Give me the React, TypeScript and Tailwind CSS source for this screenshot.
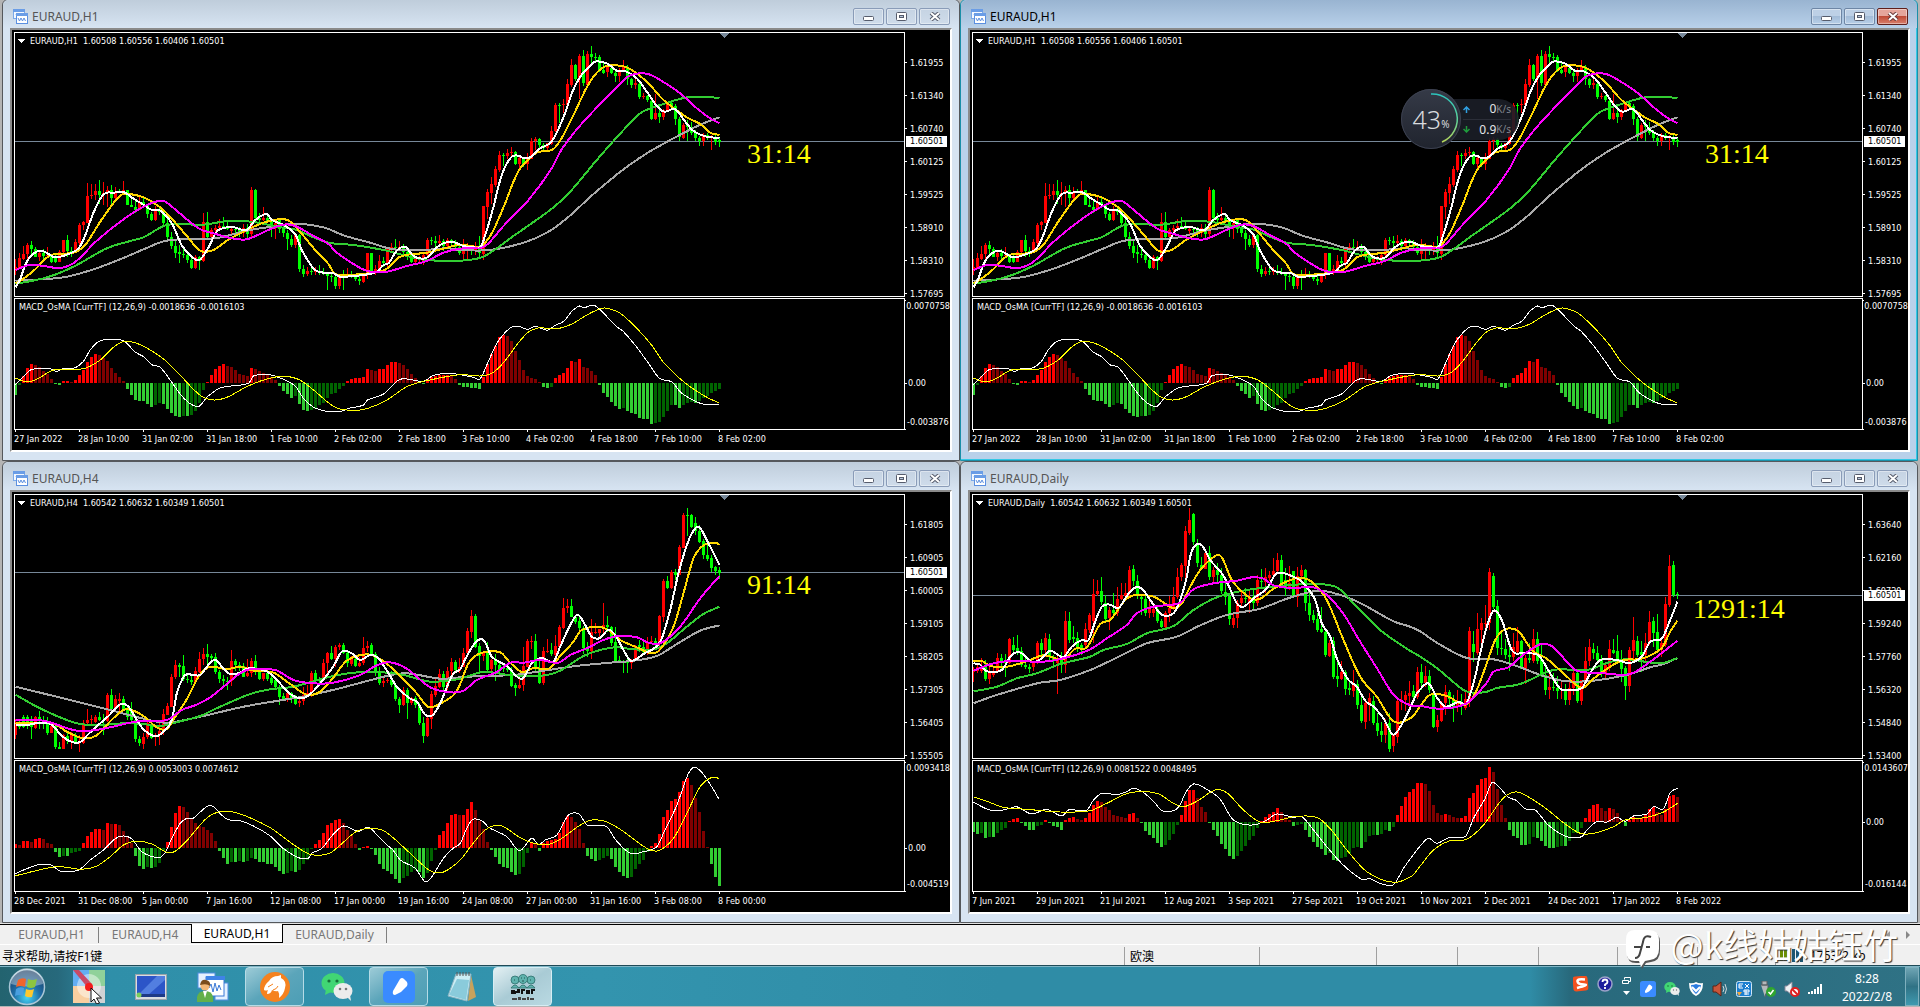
import React from "react";

type Series = { color: string; a: string; b: string };
type ChartData = {
  title: string;
  quotes: string;
  timer: string;
  timerX: number;
  timerY: number;
  priceY: number;
  originX: number;
  top: number;
  macdTop: number;
  macdZero: number;
  macdText: string;
  prices: string[];
  macdLabels: [string, string, string];
  dates: string[];
  candles: string;
  hist: string;
  averages: Series[];
  macd: Series;
  signal: Series;
};

const CHART_FONT = "font-['DejaVu_Sans_Condensed','Noto_Sans',sans-serif]";
const UI_FONT = "font-['Noto_Sans','Noto_Sans_CJK_SC',sans-serif]";

const nums = (s: string) => s.trim().split(/[\s,]+/).map(Number);

/* Plot data is stored in thirds of a pixel; the second half of a series starts 1380 units further right. */
function smoothPath(s: Series, originX: number, top: number) {
  const read = (raw: string, dx: number) => {
    const v = nums(raw);
    const out: number[][] = [];
    for (let i = 0; i < v.length; i += 2) out.push([(v[i] + dx - originX) / 3 + 0.5, v[i + 1] / 3 - top]);
    return out;
  };
  const second = read(s.b, 1380);
  const first = read(s.a, 0).filter((p) => p[0] < second[0][0] - 3);
  const p = [...first, ...second];
  let d = `M${p[0][0].toFixed(1)} ${p[0][1].toFixed(1)}`;
  for (let i = 0; i < p.length - 1; i++) {
    const p0 = p[Math.max(0, i - 1)];
    const p1 = p[i];
    const p2 = p[i + 1];
    const p3 = p[Math.min(p.length - 1, i + 2)];
    const dx = (p2[0] - p1[0]) / 3;
    const m1 = (p2[1] - p0[1]) / (p2[0] - p0[0] || 1);
    const m2 = (p3[1] - p1[1]) / (p3[0] - p1[0] || 1);
    d += `C${(p1[0] + dx).toFixed(1)} ${(p1[1] + m1 * dx).toFixed(1)} ${(p2[0] - dx).toFixed(1)} ${(p2[1] - m2 * dx).toFixed(1)} ${p2[0].toFixed(1)} ${p2[1].toFixed(1)}`;
  }
  return d;
}

function candlePaths(raw: string, top: number) {
  const v = nums(raw);
  let up = "";
  let down = "";
  for (let i = 0; i * 4 < v.length; i++) {
    const [h, o, c, l] = v.slice(i * 4, i * 4 + 4).map((n) => Math.round(n / 3) - top);
    const rising = v[i * 4 + 2] < v[i * 4 + 1];
    const y = Math.min(o, c);
    const height = Math.max(1, Math.abs(o - c));
    const d = `M${i * 4} ${h}h1V${l}h-1zM${i * 4 - 1} ${y}h3v${height}h-3z`;
    if (rising) up += d;
    else down += d;
  }
  return { up, down };
}

function histPaths(raw: string, zero: number) {
  const v = nums(raw);
  const out = ["", "", "", ""];
  v.forEach((n, i) => {
    const prev = i ? v[i - 1] : 0;
    const growing = n > 0 ? n >= prev : n <= prev;
    const k = (n > 0 ? 0 : 2) + (growing ? 0 : 1);
    out[k] += `M${i * 4 - 1} ${zero}h3v${-n}h-3z`;
  });
  return out;
}

const H1: ChartData = {
  title: "EURAUD,H1",
  quotes: "EURAUD,H1  1.60508 1.60556 1.60406 1.60501",
  timer: "31:14",
  timerX: 732,
  timerY: 130,
  priceY: 108,
  originX: 46,
  top: 33,
  macdTop: 299,
  macdZero: 84,
  macdText: "MACD_OsMA [CurrTF] (12,26,9) -0.0018636 -0.0016103",
  prices: ["1.61955", "1.61340", "1.60740", "1.60125", "1.59525", "1.58910", "1.58310", "1.57695"],
  macdLabels: ["0.0070758", "0.00", "-0.003876"],
  dates: ["27 Jan 2022", "28 Jan 10:00", "31 Jan 02:00", "31 Jan 18:00", "1 Feb 10:00", "2 Feb 02:00", "2 Feb 18:00", "3 Feb 10:00", "4 Feb 02:00", "4 Feb 18:00", "7 Feb 10:00", "8 Feb 02:00"],
  candles: `776 808 800 824,760 806 774 808,738 776 762 780,730 762 735 776,722 735 746 768,742 746 770 772,755 770 760 782,748 760 768 782,742 768 766 772,764 768 785 788,764 772 785 790,750 785 756 785,720 756 720 758,705 720 752 770,742 752 758 770,718 758 726 760,668 730 676 735,662 676 666 690,549 668 588 670,552 588 586 598,552 586 573 600,540 573 584 612,546 584 580 616,558 580 570 622,555 570 594 612,562 594 575 598,566 575 577 580,543 577 570 580,570 570 614 614,590 614 620 622,600 620 630 640,590 630 606 630,588 606 614 625,612 614 642 655,636 642 660 664,618 660 626 664,618 626 635 645,630 636 668 682,640 668 710 722,696 710 737 748,718 737 758 775,736 756 762 788,748 762 766 775,755 766 780 790,766 780 803 808,766 803 772 808,768 772 782 810,640 783 666 786,636 666 712 720,684 712 690 725,675 690 684 696,658 684 678 690,652 678 684 686,665 684 684 690,678 694 686 704,682 686 688 700,680 690 700 710,672 700 684 710,672 684 702 715,560 702 570 712,566 570 654 658,640 654 660 670,622 660 655 664,640 655 664 668,655 664 684 712,658 684 670 716,658 660 688 700,675 688 700 712,690 700 718 750,705 718 735 742,700 735 706 744,702 706 808 816,795 808 822 830,800 822 812 828,800 812 814 826,800 814 812 826,796 812 818 826,805 818 818 826,816 820 828 870,820 828 832 846,820 832 858 866,824 858 830 868,810 828 828 870,804 828 822 832,812 822 828 834,822 828 836 844,826 836 842 854,822 846 826 850,758 826 760 836,758 760 816 822,795 816 808 824,766 808 782 812,770 782 790 800,742 792 748 800,728 748 740 756,716 740 744 760,722 744 742 750,732 742 756 770,742 756 766 780,755 766 785 790,770 785 776 792,768 780 776 790,758 782 764 796,714 764 720 770,712 720 724 735,708 724 728 740,706 728 722 735,718 724 738 752,714 738 720 745,718 720 728 740,720 728 740 748,728 740 760 765,716 762 746 776,730 746 740 778,738 745 752 764,725 752 744 765,708 744 758 772,618 762 618 780,566 620 576 656,532 578 552 612,498 554 508 562,453 510 465 516,460 465 468 498,448 468 460 478,440 460 455 470,452 455 492 496,470 492 474 506,474 474 492 502,458 492 478 510,414 478 424 478,412 424 416 450,414 416 436 444,430 436 444 450,428 444 430 452,378 432 394 436,310 394 316 396,310 316 316 368,298 316 312 340,238 314 252 318,176 256 196 262,192 196 238 244,162 238 168 298,150 168 250 258,152 254 162 260,138 162 170 192,158 170 172 190,164 172 212 216,190 210 218 222,198 216 202 230,192 204 218 222,206 218 228 246,205 228 210 245,180 210 202 214,196 200 236 254,234 238 254 264,236 254 248 266,248 252 292 296,280 292 288 296,286 288 300 306,300 304 358 360,283 358 338 360,316 338 350 368,326 350 330 360,306 330 306 334,304 310 318 330,312 318 358 374,350 358 412 424,368 414 374 418,360 374 380 424,366 380 400 406,390 400 414 424,408 414 424 438,398 422 404 438,400 404 412 420,404 414 410 450,404 410 426 434,414 420 426 440`,
  hist: "-12 -2 7 15 19 18 16 12 9 4 -1 -2 2 2 1 3 8 13 21 26 29 28 25 22 15 10 6 2 -6 -12 -17 -18 -18 -21 -24 -22 -20 -21 -26 -30 -33 -34 -33 -33 -32 -28 -20 -7 1 8 14 17 19 17 16 13 9 8 7 15 14 12 10 8 6 3 -3 -8 -11 -15 -13 -21 -27 -28 -27 -26 -22 -20 -15 -11 -10 -6 -3 2 4 5 5 6 14 13 12 14 14 18 21 21 20 18 14 9 5 1 -1 4 6 7 8 8 8 7 4 -2 -4 -4 -5 -5 -6 6 19 29 37 46 48 47 42 32 23 13 7 5 4 1 -4 -5 -4 5 8 10 15 22 21 24 16 15 12 8 -2 -10 -14 -19 -23 -26 -25 -28 -30 -31 -35 -36 -36 -41 -40 -39 -34 -28 -22 -22 -25 -22 -20 -19 -20 -18 -15 -13 -10 -8 -6",
  averages: [
    { color: "#a9a9a9", a: "46,842 190,832 280,808 360,778 430,748 490,724 540,718 650,714 740,692 830,678 890,671 970,682 1030,706 1110,728 1180,748 1270,750 1340,745", b: "0,750 90,750 190,728 260,698 320,655 400,582 490,508 560,460 640,415 720,374 778,352" },
    { color: "#32cd32", a: "46,852 130,835 180,818 230,795 320,745 390,723 430,712 500,675 610,674 690,662 760,666 830,680 890,690 940,712 985,728 1060,735 1150,750 1220,768 1280,780", b: "0,782 65,772 110,745 150,715 200,680 275,626 330,575 410,480 490,390 540,340 600,315 680,292 730,290 778,294" },
    { color: "#ffd700", a: "46,850 70,836 105,808 150,766 220,758 255,735 300,665 350,597 370,582 430,592 485,626 520,662 560,708 600,752 640,750 680,722 740,690 800,665 862,660 905,702 945,750 985,792 1005,822 1060,824 1130,816 1160,806 1200,770 1280,758 1330,746", b: "0,734 58,740 80,722 100,690 135,610 160,545 180,505 230,458 275,450 300,422 340,345 380,262 410,218 440,198 500,202 560,245 610,300 680,352 720,372 750,398 778,405" },
    { color: "#ffffff", a: "46,862 60,838 75,795 95,765 125,752 165,772 215,758 235,745 252,714 280,638 310,583 340,578 370,576 400,596 430,614 455,630 480,632 515,670 545,736 575,770 598,780 625,742 652,692 700,682 740,690 765,660 800,642 815,660 850,675 885,702 905,750 945,810 1000,820 1020,830 1095,824 1130,815 1150,795 1165,790 1190,752 1215,740 1240,768 1265,776 1285,770 1310,742 1335,728 1360,726 1390,738 1420,742", b: "62,740 80,690 100,620 120,540 135,500 155,470 175,467 190,474 210,472 240,445 275,424 310,352 335,280 360,230 385,202 405,185 440,190 470,212 495,213 530,235 560,275 590,318 612,335 645,328 675,365 700,393 740,410 778,414" },
    { color: "#ff00ff", a: "46,810 90,794 130,798 180,804 225,786 290,722 370,658 430,620 486,602 520,624 560,658 600,688 640,700 690,714 740,718 800,692 850,674 885,678 940,708 985,732 1010,758 1080,804 1110,815 1160,815 1220,798 1280,783 1330,758 1380,746 1420,744", b: "60,745 85,730 130,678 205,600 275,505 300,455 350,388 420,312 480,252 510,226 560,221 600,240 660,280 710,325 750,355 778,370" },
  ],
  macd: { color: "#ffffff", a: "46,1154 75,1125 95,1108 150,1106 170,1114 190,1105 220,1105 250,1084 270,1050 295,1025 322,1018 370,1022 405,1056 430,1070 455,1094 480,1102 510,1140 545,1188 575,1214 598,1218 620,1192 660,1164 745,1150 760,1128 800,1123 840,1134 885,1158 910,1195 945,1224 1010,1236 1050,1224 1090,1215 1102,1200 1150,1182 1200,1138 1270,1144 1300,1126 1350,1120 1420,1132", b: "60,1136 80,1095 110,1030 150,984 178,980 202,988 225,979 262,991 285,976 312,963 335,934 358,918 372,923 396,915 412,922 470,980 490,995 530,1042 565,1090 598,1135 635,1146 665,1180 720,1210 745,1213 776,1215" },
  signal: { color: "#ffff00", a: "46,1135 80,1145 110,1138 160,1110 250,1106 300,1080 340,1042 372,1024 420,1034 490,1077 540,1126 600,1186 640,1200 680,1192 740,1160 800,1137 850,1129 895,1138 940,1170 1005,1222 1060,1231 1100,1226 1160,1200 1220,1160 1280,1142", b: "0,1124 60,1128 95,1120 130,1088 175,1028 205,996 235,984 290,986 335,972 380,945 415,928 435,924 480,940 530,985 575,1036 610,1087 670,1145 720,1180 750,1197 776,1208" },
};

const H4: ChartData = {
  title: "EURAUD,H4",
  quotes: "EURAUD,H4  1.60542 1.60632 1.60349 1.60501",
  timer: "91:14",
  timerX: 732,
  timerY: 99,
  priceY: 77,
  originX: 46,
  top: 35,
  macdTop: 301,
  macdZero: 87,
  macdText: "MACD_OsMA [CurrTF] (12,26,9) 0.0053003 0.0074612",
  prices: ["1.61805", "1.60905", "1.60005", "1.59105", "1.58205", "1.57305", "1.56405", "1.55505"],
  macdLabels: ["0.0093418", "0.00", "-0.004519"],
  dates: ["28 Dec 2021", "31 Dec 08:00", "5 Jan 00:00", "7 Jan 16:00", "12 Jan 08:00", "17 Jan 00:00", "19 Jan 16:00", "24 Jan 08:00", "27 Jan 00:00", "31 Jan 16:00", "3 Feb 08:00", "8 Feb 00:00"],
  candles: `776 826 786 838,776 790 800 806,764 772 800 804,766 770 790 808,768 778 802 838,768 803 770 808,752 772 782 806,768 782 786 806,772 786 818 824,790 818 798 820,794 798 862 866,846 862 866 868,822 866 826 868,818 828 842 852,816 842 826 866,820 826 846 852,826 850 846 876,780 850 790 852,746 790 780 795,766 780 778 796,764 786 770 790,756 770 780 784,762 780 784 824,700 784 706 786,688 706 746 750,706 748 718 750,698 722 716 752,708 716 746 752,738 746 770 780,726 752 780 786,766 780 836 846,828 836 850 858,820 852 830 868,780 830 790 838,790 796 834 838,820 832 826 858,790 826 812 856,748 812 762 826,728 764 738 766,642 740 652 742,600 652 616 656,608 616 620 650,584 618 656 662,638 656 660 670,646 660 666 676,622 665 634 668,576 636 596 640,564 598 582 616,552 582 590 620,582 588 594 600,580 592 636 642,630 636 658 670,645 658 664 676,650 662 664 690,570 664 602 678,598 602 616 632,606 616 618 632,610 618 650 652,598 648 640 650,594 640 602 650,586 602 634 645,630 634 656 660,640 656 640 662,638 640 658 664,645 654 668 676,654 660 682 690,674 682 710 734,700 708 718 722,694 718 700 726,696 700 716 728,705 716 732 734,716 730 724 742,682 724 706 735,674 706 700 712,632 700 640 712,630 640 662 666,650 660 660 676,596 660 608 662,576 610 578 642,558 578 598 600,556 598 562 622,550 562 556 570,548 556 578 582,575 580 608 620,588 612 594 618,588 596 618 622,590 618 608 622,530 610 564 614,544 564 558 576,548 556 582 586,576 582 632 648,620 632 670 674,650 670 662 680,655 662 660 670,632 660 676 680,672 676 718 724,710 718 734 758,682 734 690 738,684 690 728 776,710 728 714 735,708 714 734 744,730 734 790 796,772 788 828 848,770 828 774 830,692 776 702 808,656 704 678 712,626 680 642 684,632 642 680 690,622 682 634 690,594 634 606 644,600 606 630 638,594 632 620 640,564 620 578 622,504 580 514 582,450 516 468 534,462 468 560 564,548 558 588 640,576 588 576 602,546 578 630 632,596 628 600 634,582 600 614 662,602 614 632 648,616 620 626 636,610 624 630 636,620 630 678 680,668 676 684 708,650 684 676 688,560 676 618 692,536 620 544 622,528 544 543 566,522 544 628 636,602 628 668 672,562 668 574 676,538 574 572 580,548 570 582 588,526 584 558 590,496 560 500 562,414 504 444 508,418 444 438 460,418 438 470 472,464 470 486 492,470 484 504 516,498 504 564 582,545 564 574 590,478 574 515 598,488 518 515 522,506 520 508 534,430 508 496 520,468 494 500 516,498 500 548 558,500 546 602 604,588 600 606 608,600 604 606 638,598 604 610 638,596 608 602 626,555 602 558 604,540 556 560 576,544 560 576 578,530 578 546 586,528 546 542 552,534 544 550 558,466 550 468 575,356 470 364 486,348 364 384 386,330 384 336 388,328 336 344 360,254 344 262 346,160 264 166 264,144 166 166 228,162 166 200 204,170 190 214 224,196 212 246 250,238 244 286 298,256 284 296 304,284 294 324 336,318 322 332 346,320 330 340 356`,
  hist: "4 3 7 7 6 9 10 9 5 4 -4 -9 -8 -8 -5 -4 -3 5 12 16 19 19 18 25 24 24 23 17 12 5 -8 -18 -21 -19 -20 -19 -15 -3 6 21 35 42 41 36 30 25 22 21 18 15 7 -3 -10 -16 -14 -14 -13 -14 -13 -10 -11 -14 -14 -16 -16 -19 -23 -26 -25 -23 -24 -22 -16 -12 -1 4 8 15 23 25 28 29 25 18 13 4 -2 1 2 -1 -7 -16 -21 -23 -26 -31 -35 -30 -28 -24 -22 -24 -30 -25 -13 -2 13 17 25 33 34 33 33 39 46 38 27 19 6 -2 -9 -16 -19 -20 -24 -27 -26 -19 -5 6 5 -3 5 7 8 9 15 26 32 31 26 19 5 -8 -11 -13 -12 -10 -8 -11 -19 -24 -28 -30 -29 -21 -16 -12 -4 2 5 14 31 38 47 49 56 67 70 63 50 36 17 1 -16 -29 -38",
  averages: [
    { color: "#a9a9a9", a: "46,680 210,720 330,750 430,776 500,788 600,770 730,740 860,718 920,708 1030,682 1160,648 1220,640 1320,656", b: "0,652 60,648 160,645 240,634 340,619 450,608 520,602 590,588 650,552 720,512 778,496" },
    { color: "#32cd32", a: "46,704 110,740 170,768 230,790 290,796 370,790 430,792 480,798 540,784 600,768 660,740 750,702 810,688 880,680 990,650 1060,638 1130,636 1200,643 1290,665 1340,662", b: "0,656 70,636 140,644 200,648 260,645 300,632 370,588 420,570 470,562 520,568 580,568 620,550 680,500 730,462 778,440" },
    { color: "#ffd700", a: "46,790 160,792 200,815 250,835 290,826 330,784 370,750 400,752 435,772 470,802 500,808 525,770 560,718 595,650 625,622 650,622 680,628 720,620 760,632 820,638 870,672 920,704 960,695 1000,652 1040,602 1100,583 1145,600 1190,638 1250,700 1285,741 1340,720 1365,700", b: "0,672 25,610 60,580 120,577 150,608 185,636 220,624 265,626 300,588 340,545 362,512 415,500 450,514 480,540 530,562 575,580 600,568 640,500 670,400 700,295 730,256 765,248 778,254" },
    { color: "#ffffff", a: "46,796 75,796 120,788 155,794 185,828 215,846 240,846 265,822 300,790 325,768 362,732 385,740 405,772 430,808 465,829 490,815 515,780 530,700 548,654 560,643 600,645 625,614 645,599 665,620 685,640 715,640 745,625 800,634 830,660 870,702 905,715 935,698 975,652 1000,618 1025,575 1055,580 1080,600 1110,585 1135,595 1165,640 1190,680 1230,716 1250,725 1275,764 1298,765 1320,730 1345,670", b: "-20,640 0,628 15,598 45,548 70,540 95,590 140,618 185,657 215,610 245,594 280,605 300,560 330,496 352,464 375,495 395,530 420,534 445,509 465,525 490,570 512,602 550,582 600,545 630,450 655,340 685,242 708,202 720,204 745,250 778,315" },
    { color: "#ff00ff", a: "46,780 130,782 230,812 300,808 390,788 430,782 500,780 545,750 590,734 630,712 680,672 720,640 750,628 825,630 880,660 940,670 1000,668 1080,645 1130,616 1170,607 1220,626 1290,682 1350,697", b: "10,692 50,660 110,636 150,608 190,608 240,600 295,608 330,585 380,565 430,540 475,528 530,532 565,548 600,550 660,500 720,415 778,348" },
  ],
  macd: { color: "#ffffff", a: "46,1241 70,1230 120,1213 155,1216 180,1233 235,1230 270,1200 310,1170 345,1136 370,1128 395,1137 425,1175 475,1193 495,1178 515,1135 540,1090 560,1075 580,1074 600,1056 622,1039 640,1040 665,1066 685,1079 720,1082 760,1098 810,1128 850,1166 900,1195 925,1194 935,1180 965,1165 1000,1122 1030,1098 1075,1114 1105,1102 1130,1124 1155,1150 1180,1172 1200,1200 1245,1225 1275,1265 1295,1250 1330,1195 1360,1164", b: "0,1150 20,1105 38,1078 68,1084 85,1102 140,1130 178,1172 215,1135 235,1154 255,1140 290,1125 325,1065 358,1063 380,1095 440,1100 465,1138 510,1180 550,1175 590,1160 610,1120 650,1036 685,940 706,922 735,950 776,1016" },
  signal: { color: "#ffff00", a: "46,1247 170,1220 245,1228 290,1218 330,1190 370,1155 410,1144 455,1152 500,1177 525,1174 560,1142 620,1074 665,1054 715,1060 810,1103 880,1154 930,1183 985,1181 1020,1155 1070,1114 1120,1105 1160,1118 1230,1180 1290,1232 1330,1236", b: "0,1200 35,1155 75,1110 120,1096 175,1130 215,1148 260,1154 300,1138 350,1102 390,1081 435,1084 480,1108 560,1165 595,1172 640,1135 680,1060 720,980 755,952 776,955" },
};

const DAILY: ChartData = {
  title: "EURAUD,Daily",
  quotes: "EURAUD,Daily  1.60542 1.60632 1.60349 1.60501",
  timer: "1291:14",
  timerX: 720,
  timerY: 123,
  priceY: 100,
  originX: 40,
  top: 35,
  macdTop: 301,
  macdZero: 61,
  macdText: "MACD_OsMA [CurrTF] (12,26,9) 0.0081522 0.0048495",
  prices: ["1.63640", "1.62160", "1.60720", "1.59240", "1.57760", "1.56320", "1.54840", "1.53400"],
  macdLabels: ["0.0143607", "0.00", "-0.016144"],
  dates: ["7 Jun 2021", "29 Jun 2021", "21 Jul 2021", "12 Aug 2021", "3 Sep 2021", "27 Sep 2021", "19 Oct 2021", "10 Nov 2021", "2 Dec 2021", "24 Dec 2021", "17 Jan 2022", "8 Feb 2022"],
  candles: `622 636 630 665,608 632 622 638,594 634 620 638,600 620 658 662,618 658 634 672,622 646 632 652,580 634 594 640,582 594 606 630,582 604 610 650,535 610 538 612,530 556 570 580,526 564 572 584,560 572 614 620,588 614 620 628,612 620 628 638,606 622 610 634,542 610 548 612,536 548 570 586,518 570 534 590,522 538 590 600,584 590 604 618,588 610 598 702,576 598 614 640,454 616 484 638,456 484 540 550,498 532 536 548,516 534 566 576,548 554 564 586,490 556 508 560,460 510 466 520,358 482 402 548,360 402 394 408,350 394 426 434,404 428 476 484,440 474 450 510,400 450 458 470,380 458 416 468,370 416 406 420,370 408 400 412,318 400 330 408,314 326 362 378,346 362 406 418,405 410 416 465,400 418 460 468,420 460 448 474,434 458 446 470,440 446 484 490,476 484 500 504,452 500 460 508,408 460 444 486,380 444 412 450,324 412 352 416,308 352 316 362,198 318 212 362,144 218 180 226,160 162 246 254,236 250 310 322,290 316 324 330,272 326 280 328,258 280 350 360,320 350 330 370,308 330 344 368,324 346 394 402,360 396 410 436,400 408 478 496,460 494 474 504,420 474 430 504,390 428 414 440,384 414 416 430,394 430 410 458,390 410 430 448,346 428 360 438,326 362 366 380,325 366 350 398,334 354 344 362,294 346 332 350,280 334 300 338,284 300 374 378,324 360 386 408,318 386 370 390,332 334 410 414,322 412 348 440,316 348 330 360,326 330 428 452,400 428 466 484,450 466 480 490,460 478 510 516,440 508 516 520,510 516 586 590,540 588 548 590,530 544 650 656,590 648 656 680,604 656 636 660,630 636 686 704,660 684 690 704,630 692 670 710,660 672 736 748,700 736 784 790,720 786 730 806,700 730 714 782,708 722 790 796,758 790 812 828,786 812 824 846,778 824 790 850,758 790 866 876,822 858 826 876,712 830 724 850,694 724 720 750,692 720 706 754,664 708 700 740,676 694 710 722,622 712 636 716,612 636 670 690,618 668 648 680,630 648 690 700,698 700 800 804,766 802 780 816,722 782 728 786,676 728 696 764,690 696 716 740,706 716 742 786,690 742 732 756,702 732 736 764,690 744 716 750,500 724 514 742,512 552 576 606,458 578 508 584,474 510 490 560,436 490 488 524,324 488 336 510,338 348 440 446,420 438 564 584,512 564 566 584,536 566 586 596,556 584 592 634,520 592 560 602,502 576 544 582,540 544 626 628,584 628 594 672,550 594 600 610,506 602 538 610,516 538 604 612,556 598 646 652,620 646 690 706,636 690 682 716,640 682 684 694,648 684 694 716,660 690 686 716,672 686 720 736,664 720 684 736,628 684 640 706,636 640 722 728,660 722 660 734,560 660 602 664,536 604 562 618,548 568 580 598,558 578 600 612,584 600 642 650,614 642 616 658,540 620 566 632,536 570 578 582,524 572 604 610,570 604 626 666,618 624 678 720,562 678 570 696,472 574 540 600,528 542 584 592,542 576 586 636,518 584 548 610,452 550 486 556,470 484 518 560,462 516 570 580,536 570 550 590,412 556 432 562,284 434 318 440,302 316 406 410,396 402 406 418`,
  hist: "-10 -12 -11 -16 -15 -15 -11 -8 -6 1 3 4 -1 -4 -8 -8 -4 -3 2 -1 -4 -5 -8 2 4 5 3 2 4 9 17 21 20 15 12 7 6 5 4 8 9 4 -1 -9 -13 -16 -21 -25 -23 -18 -12 -3 7 21 32 32 24 15 10 -1 -8 -14 -22 -27 -34 -37 -34 -29 -24 -18 -14 -6 1 5 8 10 14 10 5 2 -4 -3 -2 -8 -15 -20 -25 -27 -33 -31 -38 -39 -36 -35 -32 -26 -25 -26 -20 -14 -13 -13 -12 -8 -9 -5 7 16 25 30 33 39 39 38 31 17 9 7 8 7 5 4 4 6 24 29 37 43 44 55 50 33 17 4 -8 -14 -16 -23 -23 -22 -15 -16 -19 -24 -26 -26 -25 -24 -24 -19 -11 -11 -6 4 13 17 18 14 11 14 13 9 2 -4 2 5 4 4 7 13 15 10 7 13 26 27 25",
  averages: [
    { color: "#a9a9a9", a: "40,730 100,708 180,684 240,668 300,660 390,630 480,588 560,550 650,530 720,496 800,465 900,446 980,416 1060,394 1110,396 1190,424 1300,484 1350,500", b: "0,514 50,548 140,594 220,598 290,618 370,648 440,664 520,662 620,645 690,622 730,612 772,594" },
    { color: "#32cd32", a: "40,694 110,680 170,655 230,640 300,612 390,590 430,570 500,552 560,520 640,498 700,450 770,412 860,390 960,378 1060,372 1130,382 1180,430 1260,510 1340,566", b: "0,590 50,624 130,690 160,698 200,695 230,684 300,672 400,630 500,630 570,606 620,598 720,610 772,594" },
    { color: "#ffd700", a: "40,602 65,603 90,618 140,620 200,604 250,586 310,598 345,566 380,562 420,492 450,480 505,412 580,410 640,445 665,430 690,380 720,330 765,288 785,292 815,360 870,414 900,416 940,386 990,360 1025,353 1060,370 1100,420 1150,540 1200,650 1250,710 1300,784 1355,772", b: "0,738 30,704 80,708 135,734 165,700 200,610 225,540 255,508 295,514 335,570 380,596 430,640 485,684 520,656 570,620 610,600 665,596 725,564 750,515 772,482" },
    { color: "#ffffff", a: "40,610 60,614 80,634 125,630 150,590 165,578 185,580 215,607 240,598 270,572 290,582 310,592 335,560 365,540 385,540 405,485 425,440 450,434 475,444 500,408 522,384 545,386 570,420 605,464 640,460 660,420 680,350 690,290 705,256 725,256 750,300 785,340 805,376 830,430 850,440 880,415 920,385 950,340 1000,350 1030,370 1065,420 1085,490 1110,530 1130,595 1165,660 1190,680 1215,722 1240,740 1270,775 1300,824 1340,765 1368,704", b: "0,688 25,670 50,712 75,740 115,726 140,728 165,650 180,580 200,500 220,452 245,480 275,570 310,580 355,586 390,640 420,686 445,690 485,684 510,640 540,600 600,602 625,610 665,590 690,545 725,536 750,480 772,425" },
    { color: "#ff00ff", a: "40,632 100,610 170,602 240,606 310,595 390,568 440,535 500,495 530,460 580,440 660,428 700,388 760,370 830,362 875,352 910,356 940,376 1000,384 1060,382 1100,405 1150,462 1200,545 1250,624 1300,704 1350,736", b: "0,738 60,746 140,730 200,668 220,635 265,622 305,588 345,560 370,551 400,562 440,605 470,632 550,640 630,642 690,605 772,542" },
  ],
  macd: { color: "#ffffff", a: "40,1026 75,1045 105,1053 150,1045 170,1040 215,1062 260,1048 305,1068 325,1050 380,1050 400,1020 425,1000 470,1004 500,995 518,985 545,994 580,1024 605,1052 640,1052 660,1035 675,1000 700,972 740,988 780,1018 815,1075 845,1092 885,1094 920,1080 950,1062 1000,1072 1025,1070 1060,1110 1100,1160 1130,1195 1160,1225 1205,1258 1230,1256 1260,1270 1300,1274 1330,1225 1355,1190", b: "0,1158 25,1135 50,1150 85,1133 137,1128 160,1075 195,1015 215,968 240,985 265,1012 290,1022 315,1046 345,1050 385,1096 440,1130 485,1130 500,1110 530,1085 560,1086 590,1072 615,1084 640,1068 680,1062 700,1040 730,1046 750,998 772,985" },
  signal: { color: "#ffff00", a: "40,1010 80,1024 130,1042 200,1048 300,1056 390,1052 440,1030 510,998 590,1000 640,1030 670,1040 710,1024 765,990 800,998 850,1050 900,1086 960,1080 1000,1070 1070,1072 1110,1106 1160,1170 1220,1235 1300,1267 1355,1248", b: "0,1218 40,1170 90,1142 140,1138 190,1095 240,1025 270,1000 300,998 370,1040 430,1088 480,1120 520,1120 580,1100 615,1080 680,1072 730,1056 772,1030" },
};

function PricePlot({ d }: { d: ChartData }) {
  const c = candlePaths(d.candles, d.top);
  return (
    <div className="relative h-[265px] overflow-hidden border border-white">
      <svg className="absolute inset-0 h-full w-full" shapeRendering="crispEdges" aria-label={`${d.title} price chart`}>
        <rect x="0" y={d.priceY} width="100%" height="1" fill="#778899" />
        <path d={c.up} fill="#ff0000" />
        <path d={c.down} fill="#00ff00" />
        {d.averages.map((s) => (
          <path key={s.color} d={smoothPath(s, d.originX, d.top)} fill="none" stroke={s.color} strokeWidth="2" />
        ))}
        <path d="M705 0h9l-4 5h-1z" fill="#778899" />
        <text x={d.timerX} y={d.timerY} fill="#ffff00" className="font-['Liberation_Serif',serif] text-[28px]">
          {d.timer}
        </text>
      </svg>
      <div className="relative flex h-4 items-center gap-[5px] pl-[3px] text-white">
        <svg width="7" height="4" shapeRendering="crispEdges">
          <path d="M0 0h7L4 4H3z" fill="#fff" />
        </svg>
        <span className="whitespace-pre">{d.quotes}</span>
      </div>
    </div>
  );
}

function MacdPlot({ d }: { d: ChartData }) {
  const h = histPaths(d.hist, d.macdZero);
  return (
    <div className="relative h-[132px] overflow-hidden border border-white">
      <svg className="absolute inset-0 h-full w-full" shapeRendering="crispEdges" aria-label={`${d.title} MACD`}>
        <path d={h[0]} fill="#ff0000" />
        <path d={h[1]} fill="#800000" />
        <path d={h[2]} fill="#32cd32" />
        <path d={h[3]} fill="#006400" />
        <path d={smoothPath(d.macd, d.originX, d.macdTop)} fill="none" stroke="#fff" strokeWidth="1" />
        <path d={smoothPath(d.signal, d.originX, d.macdTop)} fill="none" stroke="#ff0" strokeWidth="1" />
      </svg>
      <p className="relative h-4 pl-1 whitespace-nowrap">{d.macdText}</p>
    </div>
  );
}

function Chart({ d }: { d: ChartData }) {
  return (
    <div className={`h-[420px] overflow-hidden bg-black pt-0.5 pl-0.5 text-[9px] leading-4 text-white ${CHART_FONT}`}>
      <div className="flex">
        <div className="min-w-0 flex-1">
          <PricePlot d={d} />
        </div>
        <div className="relative h-[265px] w-[45px] shrink-0 pt-[14px]">
          {d.prices.map((p) => (
            <div key={p} className="flex h-[33px] items-center gap-[3px]">
              <i className="h-px w-0.5 bg-white" />
              <span>{p}</span>
            </div>
          ))}
          <span className="absolute left-px h-[11px] w-[41px] bg-white pl-1 leading-[11px] whitespace-nowrap text-black" style={{ top: d.priceY - 4 }}>
            1.60501
          </span>
        </div>
      </div>
      <div className="mt-px flex">
        <div className="min-w-0 flex-1">
          <MacdPlot d={d} />
        </div>
        <div className="flex h-[132px] w-[45px] shrink-0 flex-col whitespace-nowrap">
          <div className="flex gap-px">
            <i className="mt-0.5 h-px w-px bg-white" />
            {d.macdLabels[0]}
          </div>
          <div className="flex items-center gap-px" style={{ marginTop: d.macdZero - 23 }}>
            <i className="h-px w-0.5 bg-white" />
            {d.macdLabels[1]}
          </div>
          <div className="mt-auto flex items-end gap-px">
            <i className="h-px w-px bg-white" />
            {d.macdLabels[2]}
          </div>
        </div>
      </div>
      <div className="flex leading-[14px]">
        {d.dates.map((t) => (
          <div key={t} className="w-16 shrink-0 whitespace-nowrap">
            <i className="ml-px block h-0.5 w-px bg-white" />
            {t}
          </div>
        ))}
      </div>
    </div>
  );
}

function ChartIcon() {
  return (
    <svg width="15" height="15" viewBox="0 0 15 15">
      <rect x=".5" y=".5" width="11" height="9" fill="#f4f9ff" stroke="#7aa9ea" />
      <rect x="0" y="0" width="12" height="3" fill="#6a9de6" />
      <path d="M3 6l1-2 1 3 1-2" stroke="#4f86dc" fill="none" />
      <rect x="3.500" y="4.500" width="11" height="10" fill="#fff" stroke="#5b8fe0" />
      <rect x="3" y="4" width="12" height="3" fill="#6a9de6" />
      <path d="M5 9l1.500 3L8 9l1.500 3L11 9l1.500 3" stroke="#5b8fe0" fill="none" />
    </svg>
  );
}

function TitleButton({ kind, active }: { kind: "min" | "max" | "close"; active: boolean }) {
  const red = active && kind === "close";
  const skin = red
    ? "border-[#5f1f1b] bg-linear-to-b from-[#e5a59b] from-45% via-[#c04a36] via-50% to-[#d77f6c]"
    : active
      ? "border-[#6e86a5] bg-linear-to-b from-[#bdd0e6] from-45% via-[#a3bcd8] via-50% to-[#b8cfe8]"
      : "border-[#8a9cb8] bg-linear-to-b from-[#c5d3e3] to-[#cfdcea]";
  const edge = red ? "#6b3a3a" : "#565c6c";
  return (
    <button aria-label={kind} className={`flex h-[17px] w-[31px] items-center justify-center rounded-xs border shadow-[inset_0_0_0_1px_rgba(255,255,255,0.4)] ${skin}`}>
      {kind === "min" && (
        <svg width="11" height="9">
          <rect x=".5" y="4.500" width="10" height="4" rx="1" fill="#fff" stroke={edge} />
        </svg>
      )}
      {kind === "max" && (
        <svg width="11" height="9">
          <rect x=".5" y=".5" width="10" height="8" rx="1" fill="#fff" stroke={edge} />
          <rect x="3.500" y="3.500" width="4" height="2" fill="#b8c8dc" stroke={edge} />
        </svg>
      )}
      {kind === "close" && (
        <svg width="12" height="9" viewBox="0 0 12 9">
          <path d="M2 1l8 7M10 1L2 8" stroke={edge} strokeWidth="4" />
          <path d="M2 1l8 7M10 1L2 8" stroke="#fff" strokeWidth="2" />
        </svg>
      )}
    </button>
  );
}

function ChartWindow({ d, active = false }: { d: ChartData; active?: boolean }) {
  const frame = active
    ? "border-[#1a8fa8] bg-[#b9d1ea] shadow-[inset_-1px_-1px_0_0_#34c8e6]"
    : "border-[#55585c] bg-[#d7e4f2]";
  const bar = active ? "from-[#99b4d1] to-[#b9d1ea] text-black" : "from-[#bfcddb] to-[#d7e4f2] text-[#555]";
  return (
    <section className={`min-w-0 rounded-t-md border pb-2 ${frame}`}>
      <header className={`flex h-7 items-center gap-1 rounded-t-md bg-linear-to-b pt-[5px] pr-[9px] pl-2.5 text-xs ${bar} ${UI_FONT}`}>
        <ChartIcon />
        <h2 className="flex-1">{d.title}</h2>
        <div className="flex gap-0.5">
          <TitleButton kind="min" active={active} />
          <TitleButton kind="max" active={active} />
          <TitleButton kind="close" active={active} />
        </div>
      </header>
      <div className="mx-[7px] border-t-2 border-r-2 border-b-2 border-l-2 border-t-[#8a8a8a] border-r-white border-b-white border-l-[#8a8a8a]">
        <Chart d={d} />
      </div>
    </section>
  );
}

function SpeedWidget() {
  return (
    <div className={`absolute top-[89px] left-[1401px] flex items-center ${UI_FONT}`}>
      <div className="relative z-10 flex h-[60px] w-[60px] items-center justify-center rounded-full bg-linear-to-b from-[#353a47] to-[#20242e]">
        <svg className="absolute inset-0" width="60" height="60" fill="none" strokeWidth="1.500">
          <defs>
            <linearGradient id="arc" x1="0" y1="0" x2="0" y2="1">
              <stop offset="0" stopColor="#2cc4bd" />
              <stop offset=".55" stopColor="#5fd39a" />
              <stop offset="1" stopColor="#b5d35a" />
            </linearGradient>
          </defs>
          <circle cx="30" cy="30" r="29.500" stroke="#3c4150" strokeWidth="1" />
          <path d="M30 5A25 25 0 0 1 41 53" stroke="url(#arc)" />
        </svg>
        <span className="text-[25px] leading-none font-light text-[#d9dcdf]">43</span>
        <span className="mt-2.5 text-[10px] leading-none text-[#d9dcdf]">%</span>
      </div>
      <div className="-ml-5 flex h-[41px] w-[78px] flex-col justify-center rounded-r-full bg-[#1b1e27]/90 pr-2 pl-[22px] text-[#e4e6e8]">
        <div className="flex h-5 items-center">
          <svg width="7" height="7" viewBox="0 0 7 7" fill="none" stroke="#2f9fe0" strokeWidth="1.500">
            <path d="M3.500 7V1M.5 4l3-3 3 3" />
          </svg>
          <span className="flex-1 text-right text-xs">0</span>
          <span className="text-[10px] text-[#80848c]">K/s</span>
        </div>
        <div className="flex h-5 items-center border-t border-[#2b2e38]">
          <svg width="7" height="7" viewBox="0 0 7 7" fill="none" stroke="#1f9c3c" strokeWidth="1.500">
            <path d="M3.500 0v6M.5 3l3 3 3-3" />
          </svg>
          <span className="flex-1 text-right text-xs">0.9</span>
          <span className="text-[10px] text-[#80848c]">K/s</span>
        </div>
      </div>
    </div>
  );
}

function TabBar() {
  return (
    <nav className="flex h-5 items-center border-t border-black bg-[#f0f0f0] text-xs leading-4 text-[#777]">
      <button className="ml-px h-4 w-[98px] border-r border-[#808080] pl-1">EURAUD,H1</button>
      <button className="h-4 w-[92px]">EURAUD,H4</button>
      <button className="-mt-px h-[19px] w-[92px] self-start border border-t-0 border-black bg-white pt-0.5 text-black">EURAUD,H1</button>
      <button className="h-4 w-[104px] border-r border-[#808080]">EURAUD,Daily</button>
      <div className="ml-auto flex gap-4 pr-2.5">
        <svg width="4" height="8">
          <path d="M4 0v8L0 4z" fill="#999" />
        </svg>
        <svg width="4" height="8">
          <path d="M0 0v8l4-4z" fill="#888" />
        </svg>
      </div>
    </nav>
  );
}

function StatusBar() {
  return (
    <footer className="flex h-[22px] items-center border-t border-white bg-[#f0f0f0] text-xs leading-[18px] text-black">
      <span className="flex-1 pt-0.5 pl-0.5">寻求帮助,请按F1键</span>
      <span className="h-[18px] w-[135px] border-l border-[#a0a0a0] pt-px pl-[5px]">欧澳</span>
      <span className="h-[18px] w-[117px] border-l border-[#a0a0a0]" />
      <span className="h-[18px] w-[81px] border-l border-[#a0a0a0]" />
      <span className="h-[18px] w-[81px] border-l border-[#a0a0a0]" />
      <span className="h-[18px] w-[79px] border-l border-[#a0a0a0]" />
      <span className="h-[18px] w-20 border-l border-[#a0a0a0]" />
      <span className="h-[18px] w-[78px] border-l border-[#a0a0a0]" />
      <span className="flex h-[18px] w-[145px] items-center gap-1.5 border-l border-[#a0a0a0] pl-1">
        <svg width="24" height="14" shapeRendering="crispEdges">
          <path d="M0 0h3v12H0zM4 0h3v12H4zM8 0h3v12H8z" fill="#6b8e00" />
          <path d="M12 0h3v13h-3zM16 0h3v13h-3zM20 0h3v13h-3z" fill="#1c5672" />
        </svg>
        1753/2 kb
      </span>
    </footer>
  );
}

function Watermark() {
  return (
    <div className="pointer-events-none absolute top-[925px] right-[22px] flex items-center gap-2.5 text-white">
      <svg width="36" height="44" viewBox="0 0 36 44">
        <path d="M10 6h14q10 0 10 10v9q0 10-9 11l-5 1-4 6-2-6h-4Q1 37 1 27V15Q1 6 10 6z" fill="#555" transform="translate(1 1)" />
        <path d="M10 5h14q10 0 10 10v9q0 10-9 11l-5 1-4 6-2-6h-4Q1 36 1 26V14Q1 5 10 5z" fill="#fff" />
        <path d="M26 12q-7-3-8 5l-3 11q-1 5-5 5M9 22h8M21 22h4" stroke="#444" strokeWidth="2" fill="none" />
      </svg>
      <span className="-mt-1.5 font-['Noto_Sans_CJK_SC',sans-serif] text-[35px] leading-[42px] whitespace-nowrap [text-shadow:1px_1px_1px_#333]">@k线姑姑钰竹</span>
    </div>
  );
}

function WeChat({ size }: { size: number }) {
  return (
    <svg width={size} height={size} viewBox="0 0 32 32">
      <ellipse cx="12" cy="12" rx="11.500" ry="10" fill="#41d674" />
      <path d="M5 18l-1 6 6-3z" fill="#41d674" />
      <circle cx="8" cy="10" r="1.600" fill="#17703a" />
      <circle cx="16" cy="10" r="1.600" fill="#17703a" />
      <ellipse cx="22" cy="20" rx="9.500" ry="8" fill="#ececec" />
      <path d="M26 26l4 4-1-6z" fill="#ececec" />
      <circle cx="19" cy="18" r="1.300" fill="#777" />
      <circle cx="25" cy="18" r="1.300" fill="#777" />
    </svg>
  );
}

function BlueApp({ size }: { size: number }) {
  return (
    <svg width={size} height={size} viewBox="0 0 32 32">
      <rect width="32" height="32" rx="5" fill="#3a8bff" />
      <path d="M10 20l7-12q2-2 4 0l3 3q1 2 0 4l-6 6-6 3q-3 0-2-4z" fill="#fff" />
    </svg>
  );
}

function StartOrb() {
  return (
    <svg width="38" height="38" viewBox="0 0 38 38">
      <defs>
        <radialGradient id="orb" cx=".5" cy=".8" r=".75">
          <stop offset="0" stopColor="#45d5f5" />
          <stop offset=".5" stopColor="#1f6fa8" />
          <stop offset="1" stopColor="#1c3f66" />
        </radialGradient>
      </defs>
      <circle cx="19" cy="19" r="17.500" fill="url(#orb)" stroke="#a9c6d6" strokeWidth="1.500" />
      <path d="M3 16a16 16 0 0 1 32 0q-16 5-32 0z" fill="#fff" opacity=".35" />
      <path d="M10 12q4-3 8-1l-1 8q-4-2-9 0z" fill="#f0652c" />
      <path d="M20 11q4 2 9 0l-2 8q-4 2-8 0z" fill="#8cc63f" />
      <path d="M8 21q4-3 8-1l-1 8q-4-2-8 0z" fill="#4a9fe0" />
      <path d="M18 21q4 2 8 0l-2 8q-4 1-7-1z" fill="#fdc82f" />
    </svg>
  );
}

function PaintIcon() {
  return (
    <svg width="32" height="34" viewBox="0 0 32 34">
      <rect width="16" height="16" fill="#63aef2" />
      <rect x="16" width="16" height="16" fill="#8fd19a" />
      <rect y="16" width="16" height="17" fill="#f8cfa0" />
      <rect x="16" y="16" width="16" height="17" fill="#cfd2d4" />
      <circle cx="16" cy="16" r="12" fill="#fff" opacity=".45" />
      <path d="M0 0h6l13 14-4 4z" fill="#c94a66" />
      <circle cx="16" cy="17" r="4" fill="#f31d1d" />
      <path d="M18 18v14l3-3 2.500 5 3-1-3-5h5z" fill="#fff" stroke="#111" />
    </svg>
  );
}

function DesktopIcon() {
  return (
    <svg width="32" height="26" viewBox="0 0 32 26">
      <rect x=".5" y=".5" width="31" height="25" fill="#d8dde2" stroke="#9aa3ab" />
      <rect x="2" y="2" width="28" height="20" fill="#2c55c8" />
      <path d="M2 22L22 2h8v4L12 22z" fill="#6c9af0" opacity=".6" />
      <rect x="2" y="20" width="28" height="3" fill="#1d3a86" />
      <circle cx="4" cy="21" r="2.500" fill="#7ccf5b" />
    </svg>
  );
}

function TraderIcon() {
  return (
    <svg width="32" height="30" viewBox="0 0 32 30">
      <rect x="1" y="1" width="17" height="15" fill="#e6f1ff" stroke="#4f8de0" />
      <rect x="18" y="11" width="13" height="17" fill="#e6f1ff" stroke="#4f8de0" />
      <rect x="9" y="5" width="18" height="19" fill="#fff" stroke="#3a78d6" />
      <rect x="9" y="4" width="19" height="4" fill="#3f83e6" />
      <path d="M12 16l2-4 2 8 2-9 2 8 2-6 2 5" stroke="#3a78d6" fill="none" />
      <circle cx="8" cy="14" r="4.500" fill="#f2b877" />
      <path d="M3 13q1-6 6-5 5 1 4 6-3-3-10-1z" fill="#7a4d1c" />
      <path d="M0 30v-5q1-6 8-6t8 6v5z" fill="#63b04a" />
      <path d="M6 19l2 7 2-7z" fill="#fff" />
    </svg>
  );
}

function LeopardIcon() {
  return (
    <svg width="32" height="32" viewBox="0 0 32 32">
      <circle cx="16" cy="16" r="15" fill="#f5821f" />
      <path d="M5 19q0-5 5-9 3-5 9-5l3-1v3q6 3 4 10-1 6-6 10 1-4-1-7-2 1-6-1-1 4-5 4 0-2 1-4-2 1-4 0z" fill="#fff" />
      <path d="M9 16l5-3M14 19q4-1 5-4" stroke="#f5821f" fill="none" />
    </svg>
  );
}

function NotepadIcon() {
  return (
    <svg width="32" height="32" viewBox="0 0 32 32">
      <path d="M26 4l5 22-8 4z" fill="#c8a25c" />
      <path d="M11 3h15l-4 27-19-5z" fill="#cdeef5" stroke="#8fb6c4" />
      <path d="M12 8l12 1-3 20-17-5z" fill="#5db4c9" opacity=".6" />
      <path d="M12 1v4M15 1v4M18 1v4M21 1v4M24 1v4" stroke="#555" />
    </svg>
  );
}

function TeamIcon() {
  return (
    <div className="flex flex-col items-center">
      <svg width="26" height="16" viewBox="0 0 26 16" fill="#5fb3ae" stroke="#2d6f6c" strokeWidth=".8">
        <circle cx="5" cy="7" r="4" />
        <circle cx="21" cy="7" r="4" />
        <circle cx="13" cy="6" r="4.500" />
        <path d="M1 15q4-6 8 0zM9 15q4-6 8 0zM17 15q4-6 8 0z" />
        <path d="M11 5h1M14 5h1M4 7h1M20 7h1M12 8h2" stroke="#153f3e" />
      </svg>
      <svg width="26" height="12" shapeRendering="crispEdges">
        <path d="M1 1h4v1h2V0h3v4H6v1H1zM11 0h4v2h-2v3h-2zM16 1h4v4h-4zM21 0h4v2h-2v3h-2z" fill="#111" />
        <path d="M2 9h5v2H2zM8 8h3v3H8zM12 9h4v2h-4zM17 8h2v3h-2zM20 9h4v2h-4z" fill="#444" />
      </svg>
    </div>
  );
}

function TaskButton({ label, open, bright, children }: { label: string; open?: boolean; bright?: boolean; children: React.ReactNode }) {
  const skin = bright
    ? "border-[#d6edf3] bg-linear-to-br from-[#e3f0f3] via-[#a9cbd5] to-[#b9d9e2]"
    : open
      ? "border-[#b5dbe6] bg-linear-to-br from-[#9ccbd7] via-[#5ba5ba] to-[#4c9eb5]"
      : "border-transparent";
  return (
    <button aria-label={label} className={`mr-[3px] flex h-[39px] w-[59px] items-center justify-center rounded-sm border ${skin}`}>
      {children}
    </button>
  );
}

function Tray() {
  return (
    <div className="mr-[5px] flex items-center">
      <div className="flex items-center gap-2 pb-1.5">
        <svg width="16" height="16" viewBox="0 0 16 16">
          <rect x="0" y="0" width="15" height="15" rx="3" fill="#f4511e" transform="rotate(-5 8 8)" />
          <path d="M12 3.500Q4 2.500 4.500 5.500T11 8.500 4 12" stroke="#fff" strokeWidth="2.500" fill="none" />
        </svg>
        <svg width="16" height="16" viewBox="0 0 16 16">
          <circle cx="8" cy="8" r="7" fill="#1d1d9c" stroke="#9aa2c8" strokeWidth="1.500" />
          <path d="M5.500 6q0-2.500 2.500-2.500T10.500 6q0 1.500-2.500 2.500v1.500M8 11v2" stroke="#fff" strokeWidth="1.800" fill="none" />
        </svg>
      </div>
      <svg className="mx-2" width="11" height="20" viewBox="0 0 11 20" fill="none" stroke="#fff">
        <path d="M3.500 2.500v-2h6v4h-2M1.500 3.500h6v3h-6z" />
        <path d="M2 14h7l-3.500 4z" fill="#fff" stroke="none" />
      </svg>
      <div className="flex items-center gap-2 pt-1">
        <BlueApp size={16} />
        <WeChat size={16} />
        <svg width="16" height="16" viewBox="0 0 16 16">
          <path d="M1 2q4 1 7-1 3 2 7 1 0 10-7 13Q1 12 1 2z" fill="#fff" />
          <path d="M3 4q3 0 5-1 2 1 5 1-1 6-5 9-4-3-5-9z" fill="#2a7be0" />
          <path d="M4 6l4 4 4-4" stroke="#fff" strokeWidth="2" fill="none" />
        </svg>
        <svg width="16" height="16" viewBox="0 0 16 16">
          <path d="M1 5h3l5-4v14l-5-4H1z" fill="#c9563a" stroke="#5b2416" />
          <path d="M11 5q2 3 0 6M13 3q3 5 0 10" stroke="#d0d5d8" fill="none" />
        </svg>
        <svg width="16" height="16" viewBox="0 0 16 16">
          <rect x=".5" y=".5" width="15" height="15" rx="2" fill="#1c7fd0" stroke="#cfe6f5" />
          <path d="M3 3h4M3 5h3M3 7h4M3 3v4M9 3l4 4M13 3L9 7M8 9h5v2H8zM8 13h5M10 9v5" stroke="#fff" fill="none" />
          <path d="M1 11h5l-3 4z" fill="#f2a93b" />
        </svg>
        <svg width="16" height="16" viewBox="0 0 16 16">
          <path d="M2 0h5v4H2zM1 4h7v6q-3 3-3 6" fill="#b3b8bb" stroke="#5a6064" />
          <circle cx="11" cy="11" r="5" fill="#2fa52f" />
          <path d="M8.500 11l2 2 3-4" stroke="#fff" strokeWidth="1.500" fill="none" />
        </svg>
        <svg width="16" height="16" viewBox="0 0 16 16">
          <path d="M1 5h2l5-4v13l-5-4H1z" fill="#eef2f4" stroke="#889" />
          <circle cx="11" cy="11" r="4" fill="#fff" stroke="#e02020" strokeWidth="2" />
          <path d="M8 8l6 6" stroke="#e02020" strokeWidth="2" />
        </svg>
        <svg width="16" height="16" shapeRendering="crispEdges" fill="#fff">
          <path d="M0 11h2v2H0zM3 10h2v3H3zM6 8h2v5H6zM9 6h2v7H9zM12 3h2v10h-2z" />
        </svg>
      </div>
    </div>
  );
}

function Taskbar() {
  return (
    <footer className="flex h-10 items-center border-t border-[#7fb6c6] bg-[linear-gradient(90deg,#23636f_0,#27697c_58px,#2f8fa9_110px,#3394ae_600px,#2f8ca6_1000px,#2f8ca6_1530px,#28697c_1570px,#2f7285_100%)] shadow-[0_-1px_0_0_#1f4a57]">
      <button aria-label="Start" className="w-[59px] shrink-0 pl-2">
        <StartOrb />
      </button>
      <TaskButton label="Painter"><PaintIcon /></TaskButton>
      <TaskButton label="Show desktop"><DesktopIcon /></TaskButton>
      <TaskButton label="Trader"><TraderIcon /></TaskButton>
      <TaskButton label="Browser" open><LeopardIcon /></TaskButton>
      <TaskButton label="WeChat"><WeChat size={32} /></TaskButton>
      <TaskButton label="Notes" open><BlueApp size={32} /></TaskButton>
      <TaskButton label="Notepad"><NotepadIcon /></TaskButton>
      <TaskButton label="Terminal" open bright><TeamIcon /></TaskButton>
      <div className="flex-1" />
      <Tray />
      <div className="w-[76px] pt-0.5 text-center text-xs leading-[18px] text-white">
        <div>8:28</div>
        <div>2022/2/8</div>
      </div>
      <button aria-label="Desktop" className="mr-px h-full w-3.5 border border-[#7fb0be] bg-linear-to-b from-[#6fa5b4] via-[#2f7285] to-[#3f9ab0]" />
    </footer>
  );
}

export default function App() {
  return (
    <div className={`relative flex min-h-screen flex-col overflow-hidden bg-[#b4b4b4] ${UI_FONT}`}>
      <main className="-mt-px grid grid-cols-2 px-0.5">
        <ChartWindow d={H1} />
        <ChartWindow d={H1} active />
        <ChartWindow d={H4} />
        <ChartWindow d={DAILY} />
      </main>
      <div className="h-px bg-[#e3e3e3]" />
      <TabBar />
      <StatusBar />
      <Taskbar />
      <SpeedWidget />
      <Watermark />
    </div>
  );
}
